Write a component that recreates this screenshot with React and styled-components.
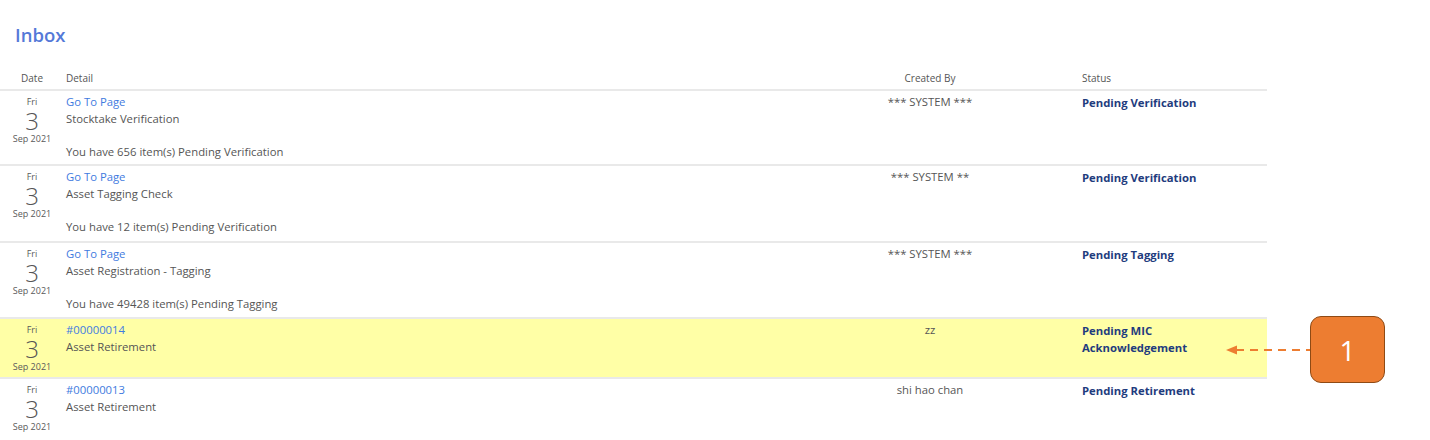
import React from "react";
import styled, { createGlobalStyle } from "styled-components";

const Global = createGlobalStyle`
  html, body { margin: 0; padding: 0; background: #fff; }
  body { font-family: "Open Sans", "Noto Sans", sans-serif; color: #555; }
`;

const Page = styled.div`
  position: relative;
  width: 1430px;
  height: 440px;
  overflow: hidden;
`;

const Title = styled.h1`
  margin: 0;
  padding: 23px 0 0 15px;
  height: 47px;
  box-sizing: border-box;
  font-size: 18.5px;
  font-weight: 600;
  color: #5479d8;
  line-height: 24px;
`;

const Table = styled.div`
  width: 1267px;
  margin-top: 20px;
`;

const Grid = styled.div`
  display: grid;
  grid-template-columns: 64px 742px 248px 213px;
  background: ${(p) => (p.$highlight ? "#ffffa6" : "transparent")};
  border-bottom: 2px solid #e9e9e9;
  box-sizing: border-box;
  min-height: ${(p) => p.$h || 0}px;
`;

const HeadCell = styled.div`
  font-size: 10px;
  color: #555;
  line-height: 14px;
  padding: 4px 0 4px ${(p) => p.$pl || 0}px;
  text-align: ${(p) => p.$align || "left"};
`;

const DateCell = styled.div`
  display: flex;
  flex-direction: column;
  align-items: center;
  padding-top: 5px;
  color: #5a5a5a;
`;

const Day = styled.span`
  font-size: 9px;
  line-height: 12px;
  color: #5a5a5a;
`;

const Num = styled.span`
  font-size: 24px;
  font-weight: 300;
  line-height: 26px;
  color: #555;
`;

const MonthYear = styled.span`
  font-size: 9px;
  line-height: 10px;
  color: #5a5a5a;
`;

const Detail = styled.div`
  padding: 3px 0 3px 2px;
  font-size: 11.3px;
  line-height: 16.7px;
`;

const Link = styled.a`
  display: block;
  color: #3f7be0;
  text-decoration: none;
`;

const Line = styled.div`
  color: #555;
  min-height: 16.7px;
`;

const Creator = styled.div`
  padding-top: 3px;
  font-size: 11.3px;
  line-height: 16.7px;
  text-align: center;
  color: #555;
`;

const Status = styled.div`
  padding: 3px 0 0 28px;
  font-size: 11.3px;
  line-height: 17px;
  font-weight: 700;
  color: #1f3c7e;
  max-width: 124px;
`;

const Callout = styled.div`
  position: absolute;
  left: 1310px;
  top: 316px;
  width: 75px;
  height: 67px;
  box-sizing: border-box;
  background: #ed7d31;
  border: 1.5px solid #8f4a14;
  border-radius: 11px;
  color: #fff;
  font-family: "Open Sans", sans-serif;
  font-size: 28px;
  display: flex;
  align-items: center;
  justify-content: center;
`;

const Arrow = styled.svg`
  position: absolute;
  left: 1224px;
  top: 342px;
`;

const rows = [
  {
    link: "Go To Page",
    lines: ["Stocktake Verification", "", "You have 656 item(s) Pending Verification"],
    by: "*** SYSTEM ***",
    status: "Pending Verification",
    h: 75,
  },
  {
    link: "Go To Page",
    lines: ["Asset Tagging Check", "", "You have 12 item(s) Pending Verification"],
    by: "*** SYSTEM **",
    status: "Pending Verification",
    h: 77,
  },
  {
    link: "Go To Page",
    lines: ["Asset Registration - Tagging", "", "You have 49428 item(s) Pending Tagging"],
    by: "*** SYSTEM ***",
    status: "Pending Tagging",
    h: 76,
  },
  {
    link: "#00000014",
    lines: ["Asset Retirement"],
    by: "zz",
    status: "Pending MIC Acknowledgement",
    highlight: true,
    h: 60,
  },
  {
    link: "#00000013",
    lines: ["Asset Retirement"],
    by: "shi hao chan",
    status: "Pending Retirement",
    h: 76,
  },
];

export default function App() {
  return (
    <Page>
      <Global />
      <Title>Inbox</Title>
      <Table>
        <Grid>
          <HeadCell $align="center">Date</HeadCell>
          <HeadCell $pl={2}>Detail</HeadCell>
          <HeadCell $align="center">Created By</HeadCell>
          <HeadCell $pl={28}>Status</HeadCell>
        </Grid>
        {rows.map((r, i) => (
          <Grid key={i} $highlight={r.highlight} $h={r.h}>
            <DateCell>
              <Day>Fri</Day>
              <Num>3</Num>
              <MonthYear>Sep 2021</MonthYear>
            </DateCell>
            <Detail>
              <Link href="#">{r.link}</Link>
              {r.lines.map((l, j) => (
                <Line key={j}>{l}</Line>
              ))}
            </Detail>
            <Creator>{r.by}</Creator>
            <Status>{r.status}</Status>
          </Grid>
        ))}
      </Table>
      <Arrow width="90" height="16" viewBox="0 0 90 16">
        <line x1="12" y1="8" x2="86" y2="8" stroke="#ed7d31" strokeWidth="2" strokeDasharray="8 6" />
        <polygon points="2,8 13,3.5 13,12.5" fill="#ed7d31" />
      </Arrow>
      <Callout>1</Callout>
    </Page>
  );
}
